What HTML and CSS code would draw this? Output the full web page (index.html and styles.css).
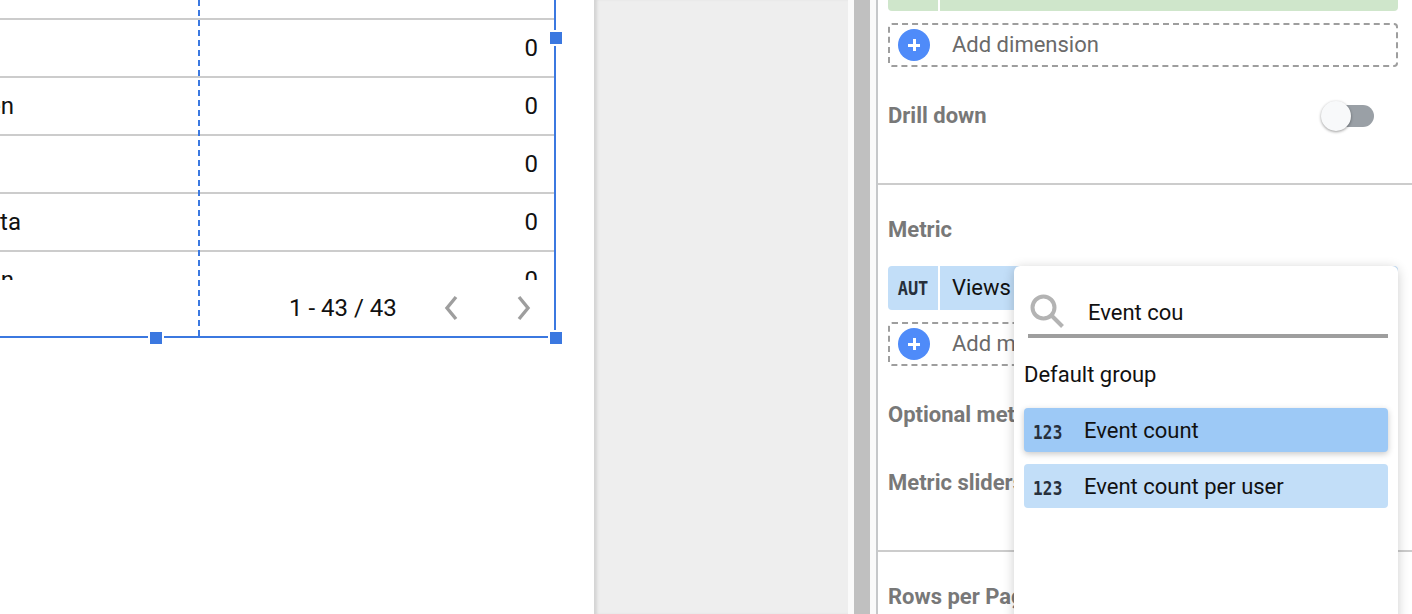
FILE: index.html
```html
<!DOCTYPE html>
<html lang="en">
<head>
<meta charset="utf-8">
<title>Report editor</title>
<link rel="stylesheet" href="styles.css">
</head>
<body>
<div class="shell">
  <main class="canvas">
    <div class="selection">
      <div class="table">
        <div class="row row-cut"></div>
        <div class="row"><span class="name"></span><span class="value">0</span></div>
        <div class="row"><span class="name">en</span><span class="value">0</span></div>
        <div class="row"><span class="name"></span><span class="value">0</span></div>
        <div class="row"><span class="name name-wide">ta</span><span class="value">0</span></div>
        <div class="row"><span class="name">en</span><span class="value">0</span></div>
      </div>
      <div class="pager">
        <span class="pager-text">1 - 43 / 43</span>
        <svg class="chev chev-prev" viewBox="0 0 14 26"><path d="M12 2 3 13l9 11"/></svg>
        <svg class="chev" viewBox="0 0 14 26"><path d="M2 2l9 11-9 11"/></svg>
      </div>
      <i class="col-guide"></i>
      <i class="handle h-right"></i>
      <i class="handle h-bottom"></i>
      <i class="handle h-corner"></i>
    </div>
  </main>
  <div class="gutter"></div>
  <div class="rail"><div class="rail-thumb"></div></div>
  <aside class="panel">
    <section class="sec sec-dim">
      <div class="chip-green"><span class="chip-green-a"></span><span class="chip-green-b"></span></div>
      <div class="add">
        <span class="plus"></span><span class="add-text">Add dimension</span>
      </div>
      <div class="drill">
        <span class="label">Drill down</span>
        <span class="toggle"><i class="track"></i><i class="thumb"></i></span>
      </div>
    </section>
    <section class="sec sec-metric">
      <div class="label metric-title">Metric</div>
      <div class="chip-blue"><span class="chip-type"><span class="type-text">AUT</span></span><span class="chip-name">Views</span></div>
      <div class="add">
        <span class="plus"></span><span class="add-text">Add metric</span>
      </div>
      <div class="label opt">Optional metrics</div>
      <div class="label slider">Metric sliders</div>
    </section>
    <section class="sec sec-rows">
      <div class="label">Rows per Page</div>
    </section>
    <div class="popup">
      <div class="search">
        <svg class="search-icon" viewBox="0 0 34 34"><circle cx="13.5" cy="13.5" r="11"/><path d="M21.5 21.5 32.5 32.5"/></svg>
        <span class="search-text">Event cou</span>
      </div>
      <div class="group">Default group</div>
      <div class="item item-active"><span class="num-box"><span class="num">123</span></span><span>Event count</span></div>
      <div class="item"><span class="num-box"><span class="num">123</span></span><span>Event count per user</span></div>
    </div>
  </aside>
</div>
</body>
</html>
```
FILE: styles.css
```css
html, body { margin: 0; height: 100%; overflow: hidden; background: #fff; }
body { font-family: Roboto, "Liberation Sans", sans-serif; font-size: 22px; color: #111; }
.shell { display: flex; width: 1412px; height: 614px; overflow: hidden; }

.canvas { width: 594px; flex: none; background: #fff; overflow: hidden; font-size: 24px; }
.selection { position: relative; width: 554px; height: 336px; border-right: 2px solid #3b78e0; border-bottom: 2px solid #3b78e0; }
.table { height: 280px; overflow: hidden; }
.row { display: flex; align-items: center; justify-content: space-between; height: 56px; border-bottom: 2px solid #ccc; padding-right: 16px; line-height: 58px; }
.row-cut { height: 18px; }
.name { display: flex; justify-content: flex-end; width: 14px; overflow: hidden; white-space: nowrap; }
.name-wide { width: 21px; }
.pager { display: flex; align-items: center; height: 56px; padding-left: 289px; }
.pager-text { width: 155px; }
.chev { width: 14px; height: 26px; fill: none; stroke: #9e9e9e; stroke-width: 3.4; }
.chev-prev { margin-right: 59px; }
.col-guide { position: absolute; left: 198px; top: 0; bottom: 0; border-left: 2px dashed #3b78e0; }
.handle { position: absolute; width: 12px; height: 12px; background: #3b78e0; box-shadow: 0 0 0 2px #fff; }
.h-right { left: 550px; top: 32px; }
.h-bottom { left: 150px; top: 332px; }
.h-corner { left: 550px; top: 332px; }

.gutter { width: 254px; flex: none; background: #eee; box-shadow: inset 4px 0 3px -1px #d4d4d4; }
.rail { width: 28px; flex: none; padding: 0 6px; box-sizing: border-box; background: #fafafa; }
.rail-thumb { height: 100%; background: #c0c0c0; }
.panel { position: relative; flex: 1; border-left: 2px solid #c6c8ca; background: #fff; }

.sec { padding: 0 14px 0 10px; border-bottom: 2px solid #ccc; }
.sec-dim { height: 183px; }
.sec-metric { height: 365px; }
.sec-rows { border-bottom: 0; padding-top: 32px; }
.label { font-weight: 700; color: #787878; line-height: 26px; }
.chip-green { display: flex; gap: 2px; height: 11px; }
.chip-green-a { width: 50px; background: #cfe6cb; border-radius: 0 0 0 4px; }
.chip-green-b { flex: 1; background: #cfe6cb; border-radius: 0 0 4px 0; }
.add { display: flex; align-items: center; box-sizing: border-box; height: 44px; margin-top: 12px; padding-left: 8px; border: 2px dashed #9e9e9e; border-radius: 4px; color: #6a6a6a; }
.add-text { margin-bottom: 2px; }
.plus { position: relative; width: 32px; height: 32px; margin-right: 22px; border-radius: 50%; background: #4f8bf9; }
.plus::before, .plus::after { content: ""; position: absolute; background: #fff; }
.plus::before { left: 10px; top: 15px; width: 12px; height: 3px; }
.plus::after { left: 14.5px; top: 10px; width: 3px; height: 12px; }
.drill { display: flex; justify-content: space-between; align-items: center; margin-top: 33px; height: 32px; }
.toggle { position: relative; width: 54px; height: 32px; margin-right: 24px; }
.track { position: absolute; left: 9px; right: 0; top: 5px; height: 22px; border-radius: 11px; background: #9aa0a6; }
.thumb { position: absolute; left: 1px; top: 1px; width: 30px; height: 30px; border-radius: 50%; background: #f8f9fa; box-shadow: 0 1px 3px rgba(0,0,0,.4); }

.metric-title { padding-top: 32px; }
.chip-blue { display: flex; gap: 2px; height: 44px; margin-top: 23px; }
.chip-type { display: flex; align-items: center; justify-content: center; width: 50px; background: #c2def8; border-radius: 4px 0 0 4px; }
.type-text { display: inline-block; transform: scaleY(1.12); font-family: "DejaVu Sans Mono", monospace; font-weight: 700; font-size: 17px; color: #27303c; }
.chip-name { flex: 1; padding-left: 12px; background: #c2def8; border-radius: 0 4px 4px 0; line-height: 44px; }
.opt { margin-top: 36px; }
.slider { margin-top: 42px; }

.popup { position: absolute; left: 136px; top: 266px; width: 384px; height: 420px; box-sizing: border-box; padding: 0 10px; background: #fff; border-radius: 6px; box-shadow: 0 2px 12px rgba(0,0,0,.2); }
.search { display: flex; align-items: center; height: 72px; box-sizing: border-box; margin-left: 4px; padding: 22px 0 0 2px; border-bottom: 4px solid #9e9e9e; }
.search-icon { width: 34px; height: 34px; margin-right: 24px; fill: none; stroke: #b3b3b3; stroke-width: 4; }
.search-text { position: relative; top: 1px; }
.group { margin-top: 23px; line-height: 28px; }
.item { display: flex; align-items: center; height: 44px; margin-top: 12px; border-radius: 4px; background: #c2def8; }
.item-active { margin-top: 19px; background: #9dc9f6; box-shadow: 0 2px 6px rgba(0,0,0,.22); }
.num-box { width: 60px; padding-left: 9px; box-sizing: border-box; }
.num { display: inline-block; transform: scaleY(1.2); font-family: "DejaVu Sans Mono", monospace; font-weight: 700; font-size: 16px; letter-spacing: .2px; color: #27303c; }
```
